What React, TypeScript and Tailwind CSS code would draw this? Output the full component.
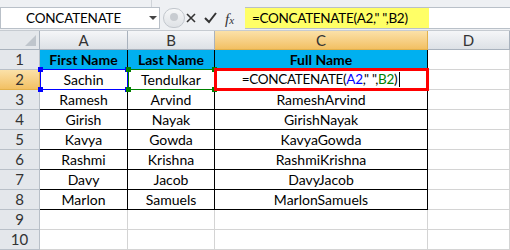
import React from "react";

const rows = [
  ["Sachin", "Tendulkar", ""],
  ["Ramesh", "Arvind", "RameshArvind"],
  ["Girish", "Nayak", "GirishNayak"],
  ["Kavya", "Gowda", "KavyaGowda"],
  ["Rashmi", "Krishna", "RashmiKrishna"],
  ["Davy", "Jacob", "DavyJacob"],
  ["Marlon", "Samuels", "MarlonSamuels"],
];

const font = { fontFamily: "Lato, 'Open Sans', sans-serif" };

const Handle = ({ className }: { className: string }) => (
  <span className={`absolute w-[5px] h-[5px] ${className}`} />
);

const FormulaBar = () => (
  <div className="h-[31px] bg-[#eef0f3] border-b border-[#c6cbd1] flex flex-col">
    <div className="h-[7px] flex">
      <div className="w-[152px] border-r border-[#d0d4d9]" />
    </div>
    <div className="flex h-[22px] items-stretch">
      <div className="w-[160px] bg-white border border-[#b9c0c8] flex items-center relative">
        <span className="pl-[25px] text-[13.5px] tracking-[-0.2px] text-black whitespace-nowrap">CONCATENATE</span>
        <svg className="absolute left-[148px] top-[8px]" width="8" height="5" viewBox="0 0 8 5">
          <path d="M0 0 L8 0 L4 4 Z" fill="#444" />
        </svg>
      </div>
      <div className="w-[85px] relative flex items-center">
        <div className="absolute left-[3px] top-[1px] w-[22px] h-[20px] rounded-full bg-gradient-to-b from-[#f6f7f8] to-[#dfe2e6] border border-[#c2c7cd]">
          <div className="absolute left-[6px] top-[4px] w-[8px] h-[8px] rounded-full bg-[#c8ccd1]" />
        </div>
        <svg className="absolute left-[26px] top-[6px]" width="10" height="10" viewBox="0 0 10 10">
          <path d="M1 1 L9 9 M9 1 L1 9" stroke="#333" strokeWidth="1.6" />
        </svg>
        <svg className="absolute left-[44px] top-[5px]" width="13" height="12" viewBox="0 0 13 12">
          <path d="M1 6 L5 10 L12 1" stroke="#333" strokeWidth="2" fill="none" />
        </svg>
        <span
          className="absolute left-[65px] top-[1px] text-[15px] italic text-[#333]"
          style={{ fontFamily: "'Liberation Serif', serif" }}
        >
          f<span className="text-[11px]">x</span>
        </span>
      </div>
      <div className="w-[184px] bg-[#ffff66] border-y border-[#b9c0c8] flex items-center pl-[7px] text-[13.5px] tracking-[-0.3px] text-black whitespace-nowrap">
        =CONCATENATE(A2," ",B2)
      </div>
      <div className="flex-1 bg-white border-y border-[#b9c0c8]" />
    </div>
  </div>
);

const colHead = "flex items-center justify-center text-[15px] text-[#333] border-r border-b border-[#a9b2bd] bg-gradient-to-b from-[#f5f6f8] to-[#dde1e6]";
const colHeadSel = "flex items-center justify-center text-[15px] text-[#333] border-r border-b border-[#e2b04b] bg-gradient-to-b from-[#fbe1a8] to-[#f2c062]";
const rowHead = "flex items-center justify-center text-[15px] text-[#333] bg-[#e4e7eb] border-r border-b border-[#b9c0c8]";
const cell = "flex items-center justify-center text-[14px] text-black border-r border-b border-black whitespace-nowrap";
const head = "flex items-center justify-center text-[14px] font-bold text-black bg-[#00b0f0] border-r border-b border-black whitespace-nowrap";
const empty = "border-r border-b border-[#d4d4d4]";

const App = () => {
  return (
    <div className="w-[510px] h-[250px] bg-white overflow-hidden" style={font}>
      <FormulaBar />
      <div className="grid grid-cols-[40px_88px_87px_213px_1fr] grid-rows-[19px_repeat(10,20px)]">
        <div className="relative bg-[#e4e7eb] border-r border-b border-[#a9b2bd]">
          <svg className="absolute right-[3px] bottom-[3px]" width="11" height="11" viewBox="0 0 11 11">
            <path d="M11 0 L11 11 L0 11 Z" fill="#bfc5cc" />
          </svg>
        </div>
        <div className={colHead}>A</div>
        <div className={colHead}>B</div>
        <div className={colHeadSel}>C</div>
        <div className={colHead}>D</div>

        {/* row 1 */}
        <div className={rowHead}>1</div>
        <div className={head}>First Name</div>
        <div className={head}>Last Name</div>
        <div className={head}>Full Name</div>
        <div className={empty} />

        {/* row 2 */}
        <div className="flex items-center justify-center text-[15px] text-[#333] bg-gradient-to-b from-[#fbe1a8] to-[#f2c062] border-r border-b border-[#e2b04b]">2</div>
        <div className={`relative ${cell}`}>
          <div className="absolute left-0 top-[-1px] right-[-1px] bottom-[-1px] border border-[#0000ff]" />
          <Handle className="bg-[#0000ff] left-[-2px] top-[-3px]" />
          <Handle className="bg-[#0000ff] right-[-3px] top-[-3px]" />
          <Handle className="bg-[#0000ff] left-[-2px] bottom-[-3px]" />
          <Handle className="bg-[#0000ff] right-[-3px] bottom-[-3px]" />
          Sachin
        </div>
        <div className={`relative ${cell}`}>
          <div className="absolute left-0 top-[-1px] right-[-1px] bottom-[-1px] border border-[#008000]" />
          <Handle className="bg-[#008000] left-[-2px] top-[-3px]" />
          <Handle className="bg-[#008000] right-[-3px] top-[-3px]" />
          <Handle className="bg-[#008000] left-[-2px] bottom-[-3px]" />
          <Handle className="bg-[#008000] right-[-3px] bottom-[-3px]" />
          Tendulkar
        </div>
        <div className={`relative ${cell}`}>
          <div className="absolute left-[-1px] top-[-2px] right-[-2px] bottom-[-2px] border-[3px] border-[#ff0000]" />
          <span className="relative text-[13.5px] tracking-[-0.3px]">
            =CONCATENATE(<span className="text-[#0000ff]">A2</span>," ",<span className="text-[#008000]">B2</span>)
          </span>
          <span className="relative w-px h-[15px] bg-black ml-[2px]" />
        </div>
        <div className={empty} />

        {rows.slice(1).map((r, i) => (
          <React.Fragment key={i}>
            <div className={rowHead}>{i + 3}</div>
            <div className={cell}>{r[0]}</div>
            <div className={cell}>{r[1]}</div>
            <div className={cell}>{r[2]}</div>
            <div className={empty} />
          </React.Fragment>
        ))}

        {[9, 10].map((n) => (
          <React.Fragment key={n}>
            <div className={rowHead}>{n}</div>
            <div className={empty} />
            <div className={empty} />
            <div className={empty} />
            <div className={empty} />
          </React.Fragment>
        ))}
      </div>
    </div>
  );
};

export default App;
